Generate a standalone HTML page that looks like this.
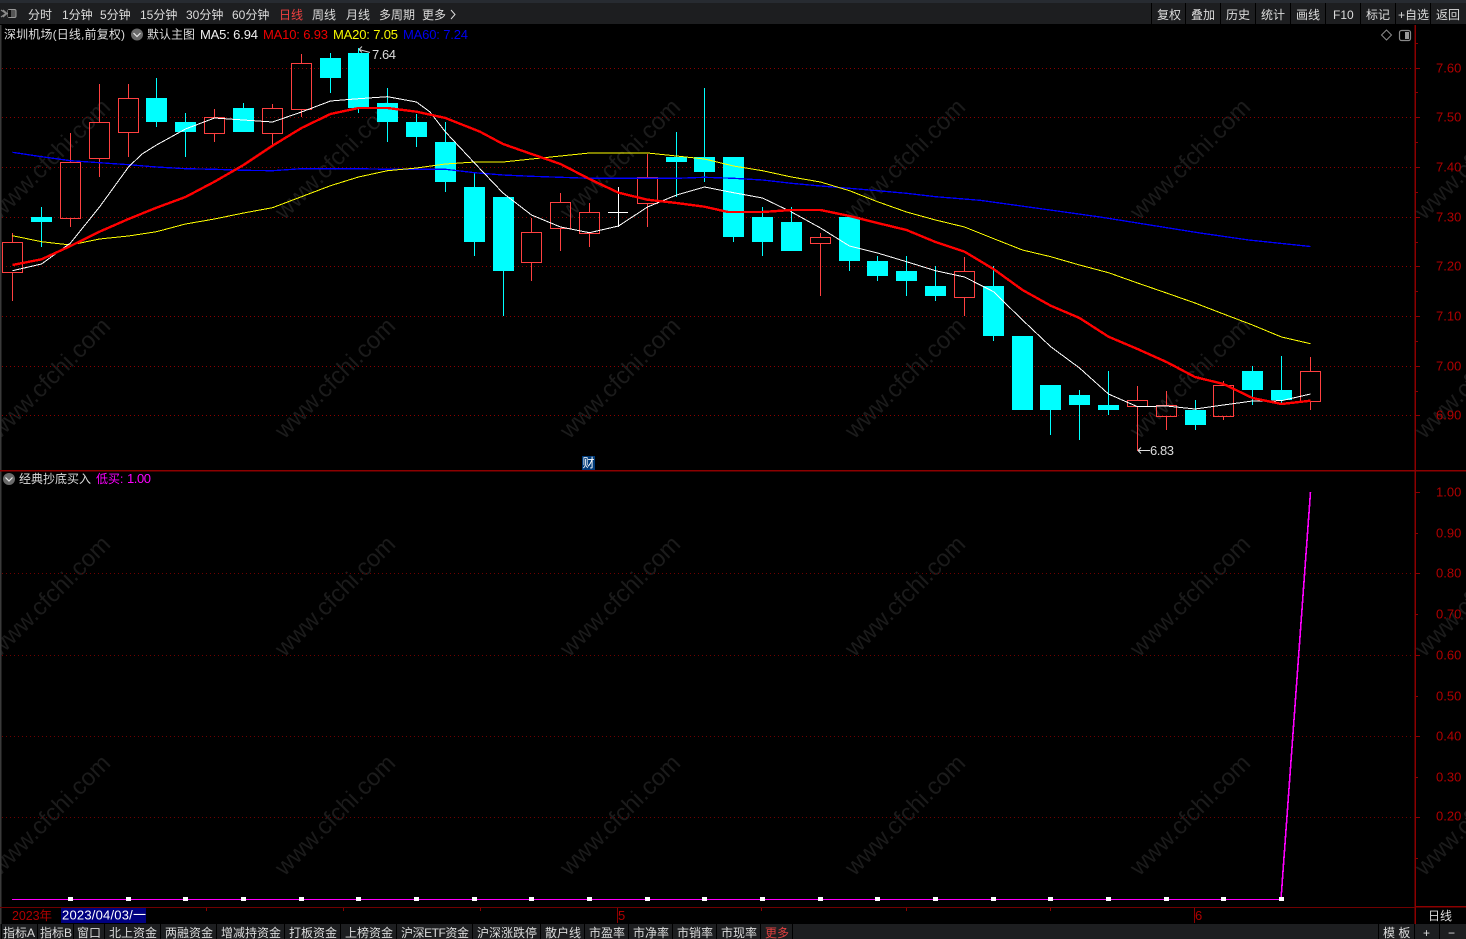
<!DOCTYPE html>
<html lang="zh">
<head>
<meta charset="utf-8">
<title>深圳机场</title>
<style>
html,body{margin:0;padding:0;background:#000;width:1466px;height:939px;overflow:hidden}
svg{display:block;position:absolute;left:0;top:0}
text{font-family:"Liberation Sans","Noto Sans CJK SC",sans-serif;font-size:12px;fill:#dcdcdc}
.n{font-size:13px}
.ax{font-size:13px;fill:#b00000}
.wm{font-size:24px;fill:#1b1b1b;text-anchor:middle}
.c{shape-rendering:crispEdges}
</style>
</head>
<body>
<svg width="1466" height="939" viewBox="0 0 1466 939" xmlns="http://www.w3.org/2000/svg">
<rect width="1466" height="939" fill="#000"/>

<!-- watermark -->
<g>
<text class="wm" transform="translate(50,159) rotate(-45)" y="8">www.cfchi.com</text>
<text class="wm" transform="translate(335,159) rotate(-45)" y="8">www.cfchi.com</text>
<text class="wm" transform="translate(620,159) rotate(-45)" y="8">www.cfchi.com</text>
<text class="wm" transform="translate(905,159) rotate(-45)" y="8">www.cfchi.com</text>
<text class="wm" transform="translate(1190,159) rotate(-45)" y="8">www.cfchi.com</text>
<text class="wm" transform="translate(1475,159) rotate(-45)" y="8">www.cfchi.com</text>
<text class="wm" transform="translate(50,378) rotate(-45)" y="8">www.cfchi.com</text>
<text class="wm" transform="translate(335,378) rotate(-45)" y="8">www.cfchi.com</text>
<text class="wm" transform="translate(620,378) rotate(-45)" y="8">www.cfchi.com</text>
<text class="wm" transform="translate(905,378) rotate(-45)" y="8">www.cfchi.com</text>
<text class="wm" transform="translate(1190,378) rotate(-45)" y="8">www.cfchi.com</text>
<text class="wm" transform="translate(1475,378) rotate(-45)" y="8">www.cfchi.com</text>
<text class="wm" transform="translate(50,596) rotate(-45)" y="8">www.cfchi.com</text>
<text class="wm" transform="translate(335,596) rotate(-45)" y="8">www.cfchi.com</text>
<text class="wm" transform="translate(620,596) rotate(-45)" y="8">www.cfchi.com</text>
<text class="wm" transform="translate(905,596) rotate(-45)" y="8">www.cfchi.com</text>
<text class="wm" transform="translate(1190,596) rotate(-45)" y="8">www.cfchi.com</text>
<text class="wm" transform="translate(1475,596) rotate(-45)" y="8">www.cfchi.com</text>
<text class="wm" transform="translate(50,815) rotate(-45)" y="8">www.cfchi.com</text>
<text class="wm" transform="translate(335,815) rotate(-45)" y="8">www.cfchi.com</text>
<text class="wm" transform="translate(620,815) rotate(-45)" y="8">www.cfchi.com</text>
<text class="wm" transform="translate(905,815) rotate(-45)" y="8">www.cfchi.com</text>
<text class="wm" transform="translate(1190,815) rotate(-45)" y="8">www.cfchi.com</text>
<text class="wm" transform="translate(1475,815) rotate(-45)" y="8">www.cfchi.com</text>
</g>

<!-- dotted grid -->
<path class="c" fill="none" stroke="#8a0000" stroke-width="1" stroke-dasharray="1 3" d="M2 68.5H1413M2 117.5H1413M2 167.5H1413M2 217.5H1413M2 266.5H1413M2 316.5H1413M2 366.5H1413M2 415.5H1413"/>
<path class="c" fill="none" stroke="#6e0000" stroke-width="1" stroke-dasharray="1 3" d="M2 573.5H1413M2 655.5H1413M2 736.5H1413M2 817.5H1413"/>

<!-- cyan wicks -->
<path class="c" fill="none" stroke="#00ffff" stroke-width="1" d="M41.5 207V247M156.5 78V127M185.5 113V157M243.5 103V132M330.5 53V93M358.5 48V113M387.5 88V142M416.5 114V147M445.5 122V192M474.5 172V256M503.5 197V316M676.5 132V197M704.5 88V182M733.5 157V242M762.5 207V256M791.5 207V251M849.5 217V271M877.5 256V281M906.5 256V296M935.5 266V301M993.5 266V341M1050.5 385V435M1079.5 390V440M1108.5 371V415M1195.5 400V430M1252.5 366V405M1281.5 356V403"/>
<!-- cyan bodies -->
<path class="c" fill="#00ffff" d="M31 217h21v5h-21zM146 98h21v24h-21zM175 122h21v10h-21zM233 108h21v24h-21zM320 58h21v20h-21zM348 53h21v55h-21zM377 103h21v19h-21zM406 122h21v15h-21zM435 142h21v40h-21zM464 187h21v55h-21zM493 197h21v74h-21zM666 157h21v5h-21zM694 157h21v15h-21zM723 157h21v80h-21zM752 217h21v25h-21zM781 222h21v29h-21zM839 217h21v44h-21zM867 261h21v15h-21zM896 271h21v10h-21zM925 286h21v10h-21zM983 286h21v50h-21zM1012 336h21v74h-21zM1040 385h21v25h-21zM1069 395h21v10h-21zM1098 405h21v5h-21zM1185 410h21v15h-21zM1242 371h21v19h-21zM1271 390h21v10h-21z"/>
<!-- red wicks -->
<path class="c" fill="none" stroke="#ff4040" stroke-width="1" d="M12.5 233V242M12.5 272V301M70.5 133V162M70.5 218V227M99.5 84V122M99.5 158V177M128.5 84V98M128.5 132V157M214.5 109V117M214.5 133V142M272.5 104V108M272.5 133V146M301.5 54V63M301.5 109V117M531.5 218V232M531.5 262V281M560.5 193V202M560.5 228V251M589.5 203V212M589.5 233V247M647.5 154V177M647.5 203V227M820.5 233V237M820.5 243V296M964.5 257V271M964.5 297V316M1137.5 386V400M1137.5 406V451M1166.5 391V405M1166.5 416V430M1223.5 381V385M1223.5 416V420M1310.5 357V371M1310.5 401V410"/>
<!-- red bodies -->
<path class="c" fill="none" stroke="#ff4040" stroke-width="1" d="M2.5 242.5h20v30h-20zM60.5 162.5h20v56h-20zM89.5 122.5h20v36h-20zM118.5 98.5h20v34h-20zM204.5 117.5h20v16h-20zM262.5 108.5h20v25h-20zM291.5 63.5h20v46h-20zM521.5 232.5h20v30h-20zM550.5 202.5h20v26h-20zM579.5 212.5h20v21h-20zM637.5 177.5h20v26h-20zM810.5 237.5h20v6h-20zM954.5 271.5h20v26h-20zM1127.5 400.5h20v6h-20zM1156.5 405.5h20v11h-20zM1213.5 385.5h20v31h-20zM1300.5 371.5h20v30h-20z"/>
<!-- doji -->
<path class="c" fill="none" stroke="#ffffff" stroke-width="1" d="M618.5 187V227M608 212.5H628"/>

<!-- MA60 -->
<polyline class="c" fill="none" stroke="#0000ff" stroke-width="1.3" points="12.5,152.3 41.5,156.7 70.5,160.7 99.5,162.7 128.5,164.7 156.5,167 185.5,168.7 214.5,169.3 243.5,170.3 272.5,170.7 301.5,168.7 358.5,168.7 387.5,169.3 445.5,169.3 474.5,172.7 503,175 531.5,176.3 560.5,177.3 589.5,178.3 676.5,178.3 704.5,177.3 733.5,178.3 762.5,180 791.5,183.3 820.5,186 849.5,188.3 877.5,190.7 906.5,193.3 935.5,196.7 980,200.3 1050,210 1100,217 1150,225 1200,233 1248.7,240 1310.5,246.5"/>
<!-- MA20 -->
<polyline class="c" fill="none" stroke="#ffff00" stroke-width="1" points="12.5,235.7 41.5,241.7 70.5,245 99.5,239 128.5,236 156.5,231.7 185.5,224 214.5,219 243.5,213 272.5,207.7 301.5,196.7 330.5,185.7 358.5,177 387.5,170.7 416.5,168 445.5,164 474.5,162 503,162 531.5,159 560.5,156 589.5,153 647.5,153 676.5,156 704.5,159 733.5,166 762.5,170.7 791.5,177 820.5,182 849.5,190.7 877.5,201.7 906.5,212 935.5,220 964.5,227 997,240 1022.5,250 1050.7,256.7 1079.5,265 1108.5,272.7 1137.5,283 1166.5,293 1195,303 1223.5,314 1252.5,325 1281.5,337 1310.5,343.7"/>
<!-- MA5 -->
<polyline class="c" fill="none" stroke="#ffffff" stroke-width="1" points="12.5,270.7 41.5,264 70.5,243 99.5,207 128.5,167 142,154 156.5,145 185.5,129 214.5,118 243.5,120 272.5,122 301.5,112 330.5,101 358.5,98.7 387.5,96.7 416.5,102 430,112 445.5,132 474.5,163 503,193 531.5,215 560.5,227 589.5,232.7 618.5,226 647.5,207 676.5,195 704.5,187 733.5,192.7 762.5,198 791.5,212 820.5,228 849.5,246 877.5,253 906.5,261.7 935.5,270.7 964.5,277 993.5,291.7 1022.5,320 1050.7,346.7 1079.5,368 1108.5,394 1137.5,406.7 1166.5,406 1195,409 1223.5,405 1252.5,401 1281.5,400.7 1310.5,394"/>
<!-- MA10 -->
<polyline class="c" fill="none" stroke="#ff0000" stroke-width="2.4" points="12.5,265 41.5,259.3 70.5,246 99.5,231.7 128.5,219 156.5,207.7 185.5,197 214.5,181.7 243.5,165 272.5,145.7 301.5,128 330.5,114 358.5,108 387.5,108 416.5,111.7 445.5,118 480,131.7 503,144 531.5,154 560.5,164 589.5,179 618.5,192.7 647.5,199.7 676.5,203 704.5,206.7 728,212 762.5,212 791.5,210 820.5,210 849.5,216 877.5,223 906.5,230 935.5,242 964.5,251.7 993.5,269 1022.5,290 1050.7,305.7 1079.5,318 1108.5,336.7 1137.5,349 1166.5,362 1195,377 1223.5,384 1252.5,398 1281.5,404 1310.5,400.7"/>

<!-- price markers -->
<path fill="none" stroke="#d0d0d0" stroke-width="1" d="M370 52.5L359 49.5M359 49.5l3-3M359 49.5l3 3"/>
<text class="n" x="372" y="59" textLength="24">7.64</text>
<path fill="none" stroke="#e0e0e0" stroke-width="1" d="M1150 450.5H1138M1138 450.5l3-3M1138 450.5l3 3"/>
<text class="n" x="1150" y="455" textLength="24">6.83</text>

<!-- lower panel: indicator line -->
<path class="c" fill="none" stroke="#ff00ff" stroke-width="1" d="M12 899.5H1281"/>
<polyline class="c" fill="none" stroke="#ff00ff" stroke-width="1.6" points="1281,899 1310.5,492"/>
<path class="c" fill="#ffffff" d="M68 897h5v4h-5zM126 897h5v4h-5zM183 897h5v4h-5zM241 897h5v4h-5zM299 897h5v4h-5zM356 897h5v4h-5zM414 897h5v4h-5zM472 897h5v4h-5zM529 897h5v4h-5zM587 897h5v4h-5zM645 897h5v4h-5zM702 897h5v4h-5zM760 897h5v4h-5zM818 897h5v4h-5zM875 897h5v4h-5zM933 897h5v4h-5zM991 897h5v4h-5zM1048 897h5v4h-5zM1106 897h5v4h-5zM1164 897h5v4h-5zM1221 897h5v4h-5zM1279 897h5v4h-5z"/>

<!-- frames -->
<rect class="c" x="0" y="25" width="1.5" height="899" fill="#3a3a3a"/>
<rect class="c" x="0" y="470" width="1466" height="1.4" fill="#8c0000"/>
<rect class="c" x="1414.5" y="25" width="1.5" height="899" fill="#8c0000"/>
<rect class="c" x="0" y="907" width="1415" height="1" fill="#700000"/>
<rect class="c" x="1415" y="906" width="51" height="1.4" fill="#8c0000"/>
<!-- axis ticks -->
<path class="c" fill="none" stroke="#8c0000" stroke-width="1" d="M1415 68.5h5M1415 117.5h5M1415 167.5h5M1415 217.5h5M1415 266.5h5M1415 316.5h5M1415 366.5h5M1415 415.5h5M1415 43.5h3M1415 92.5h3M1415 142.5h3M1415 192.5h3M1415 242.5h3M1415 291.5h3M1415 341.5h3M1415 391.5h3M1415 492.5h5M1415 533.5h3M1415 573.5h5M1415 614.5h3M1415 655.5h5M1415 696.5h3M1415 736.5h5M1415 777.5h3M1415 817.5h5M1415 858.5h3M206.5 908v3M343.5 908v3M480.5 908v3M761.5 908v3M906.5 908v3M1050.5 908v3M617.5 908v15M1194.5 908v15"/>

<!-- axis labels -->
<text class="ax" x="1436" y="72.5">7.60</text>
<text class="ax" x="1436" y="121.5">7.50</text>
<text class="ax" x="1436" y="171.5">7.40</text>
<text class="ax" x="1436" y="221.5">7.30</text>
<text class="ax" x="1436" y="270.5">7.20</text>
<text class="ax" x="1436" y="320.5">7.10</text>
<text class="ax" x="1436" y="370.5">7.00</text>
<text class="ax" x="1436" y="419.5">6.90</text>
<text class="ax" x="1436" y="496.5">1.00</text>
<text class="ax" x="1436" y="537.5">0.90</text>
<text class="ax" x="1436" y="577.5">0.80</text>
<text class="ax" x="1436" y="618.5">0.70</text>
<text class="ax" x="1436" y="659.5">0.60</text>
<text class="ax" x="1436" y="700.5">0.50</text>
<text class="ax" x="1436" y="740.5">0.40</text>
<text class="ax" x="1436" y="781.5">0.30</text>
<text class="ax" x="1436" y="820.5">0.20</text>

<!-- top bar -->
<rect class="c" x="0" y="0" width="1466" height="3" fill="#272b31"/>
<rect class="c" x="0" y="3" width="1466" height="21" fill="#1d1e20"/>
<rect class="c" x="0" y="24" width="1466" height="1" fill="#000"/>
<path class="c" fill="none" stroke="#000" stroke-width="1" d="M1151.5 3v21M1185.5 3v21M1220.5 3v21M1255.5 3v21M1290.5 3v21M1325.5 3v21M1360.5 3v21M1395.5 3v21M1430.5 3v21"/>
<path fill="none" stroke="#8a8a8a" stroke-width="1.2" d="M1 10l5 3.5-5 3.5M3 10l4 3.5-4 3.5"/>
<rect x="8" y="9.5" width="8" height="8" rx="1.5" fill="#555" stroke="#999" stroke-width="1"/>
<rect class="c" x="8" y="10" width="3" height="7" fill="#111"/>

<text x="28" y="19">分时</text>
<text x="62" y="19">1分钟</text>
<text x="100" y="19">5分钟</text>
<text x="140" y="19">15分钟</text>
<text x="186" y="19">30分钟</text>
<text x="232" y="19">60分钟</text>
<text x="279" y="19" style="fill:#f04040">日线</text>
<text x="312" y="19">周线</text>
<text x="346" y="19">月线</text>
<text x="379" y="19">多周期</text>
<text x="422" y="19">更多</text>
<path fill="none" stroke="#dcdcdc" stroke-width="1" d="M451 10l4 4.5-4 4.5"/>

<text x="1157" y="19">复权</text>
<text x="1191" y="19">叠加</text>
<text x="1226" y="19">历史</text>
<text x="1261" y="19">统计</text>
<text x="1296" y="19">画线</text>
<text x="1333" y="19">F10</text>
<text x="1366" y="19">标记</text>
<text x="1398" y="19">+自选</text>
<text x="1436" y="19">返回</text>

<!-- info line -->
<text x="4" y="38.5" textLength="121" lengthAdjust="spacing">深圳机场(日线,前复权)</text>
<circle cx="137" cy="34.5" r="6" fill="#6a6a6a"/>
<path fill="none" stroke="#e8e8e8" stroke-width="1.2" d="M133.5 33l3.5 3.5 3.5-3.5"/>
<text x="147" y="38.5">默认主图</text>
<text class="n" x="200" y="39" textLength="58" style="fill:#f0f0f0">MA5: 6.94</text>
<text class="n" x="263" y="39" textLength="65" style="fill:#ee0000">MA10: 6.93</text>
<text class="n" x="333" y="39" textLength="65" style="fill:#f8f800">MA20: 7.05</text>
<text class="n" x="403" y="39" textLength="65" style="fill:#0000f0">MA60: 7.24</text>
<path fill="none" stroke="#8a8a8a" stroke-width="1" d="M1386.5 30l5 5-5 5-5-5z"/>
<rect x="1399.5" y="30.5" width="11" height="10" rx="2" fill="none" stroke="#8a8a8a" stroke-width="1.2"/>
<rect class="c" x="1405" y="32" width="4" height="7" fill="#9a9a9a"/>

<!-- cai badge -->
<rect class="c" x="582" y="456" width="13" height="14" fill="#003a78"/>
<text x="582.5" y="467" style="fill:#fff">财</text>

<!-- lower header -->
<circle cx="9" cy="479" r="6" fill="#6a6a6a"/>
<path fill="none" stroke="#e8e8e8" stroke-width="1.2" d="M5.5 477.5l3.5 3.5 3.5-3.5"/>
<text x="19" y="483">经典抄底买入</text>
<text x="96" y="483" style="fill:#ff00ff">低买:</text>
<text class="n" x="127" y="483" textLength="24" style="fill:#ff00ff">1.00</text>

<!-- x axis -->
<text x="12" y="920" class="ax" style="font-size:12.5px" textLength="40">2023年</text>
<rect class="c" x="61" y="908" width="85" height="15" fill="#000080"/>
<text class="n" x="62" y="919.5" textLength="84" style="fill:#fff">2023/04/03/一</text>
<text class="ax" x="618" y="920">5</text>
<text class="ax" x="1195" y="920">6</text>
<text x="1428" y="920">日线</text>

<!-- bottom tabs -->
<rect class="c" x="0" y="924" width="1466" height="15" fill="#1d1e20"/>
<path class="c" fill="none" stroke="#000" stroke-width="1" d="M1.5 924v15M37.5 924v15M73.5 924v15M104.5 924v15M160.5 924v15M216.5 924v15M284.5 924v15M340.5 924v15M396.5 924v15M472.5 924v15M540.5 924v15M584.5 924v15M628.5 924v15M672.5 924v15M716.5 924v15M760.5 924v15M792.5 924v15M1378.5 924v15M1414.5 924v15M1439.5 924v15"/>
<text x="3" y="937">指标A</text>
<text x="40" y="937">指标B</text>
<text x="77" y="937">窗口</text>
<text x="109" y="937">北上资金</text>
<text x="165" y="937">两融资金</text>
<text x="221" y="937">增减持资金</text>
<text x="289" y="937">打板资金</text>
<text x="345" y="937">上榜资金</text>
<text x="401" y="937" textLength="68">沪深ETF资金</text>
<text x="477" y="937">沪深涨跌停</text>
<text x="545" y="937">散户线</text>
<text x="589" y="937">市盈率</text>
<text x="633" y="937">市净率</text>
<text x="677" y="937">市销率</text>
<text x="721" y="937">市现率</text>
<text x="765" y="937" style="fill:#e04040">更多</text>
<text x="1383" y="937" xml:space="preserve">模 板</text>
<text x="1423" y="937">+</text>
<text x="1448" y="937">−</text>
</svg>
</body>
</html>
